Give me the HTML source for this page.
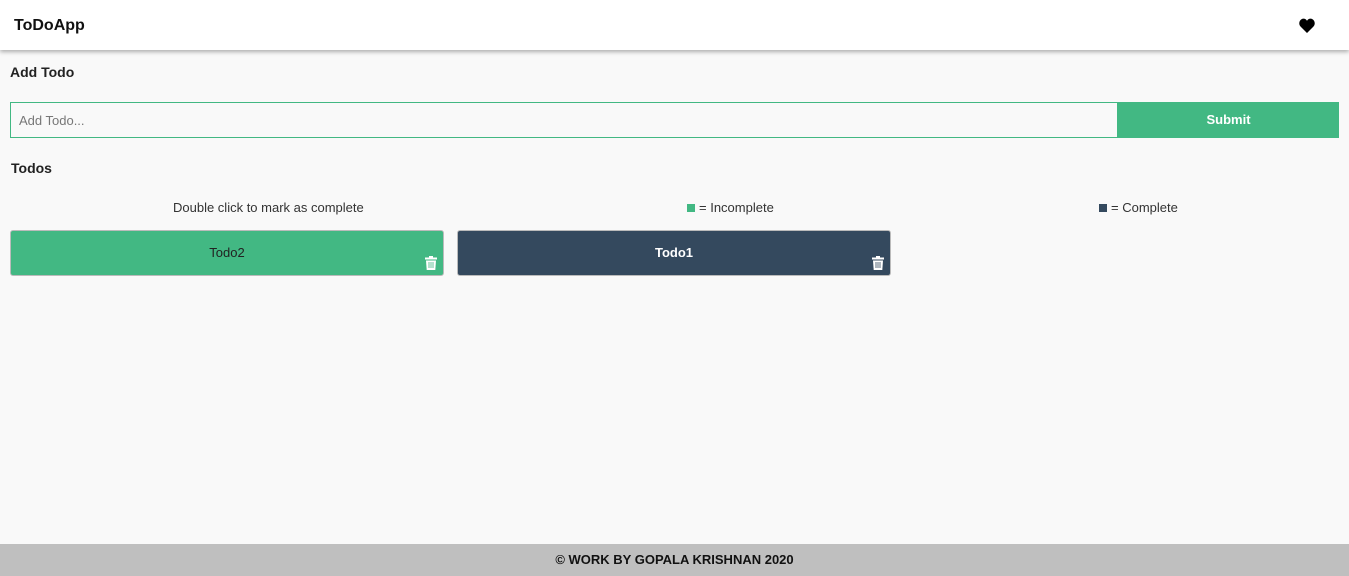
<!DOCTYPE html>
<html><head><style>
body{margin:0;width:1349px;height:576px;background:#f9f9f9;font-family:"Liberation Sans",sans-serif;position:relative;overflow:hidden}
.nav{position:absolute;left:0;top:0;width:1349px;height:50px;background:#fff;box-shadow:0 2px 4px rgba(0,0,0,.3)}
.nav .t{position:absolute;left:14px;top:17px;font-size:16px;font-weight:bold;color:#111}
.h{position:absolute;font-size:14px;font-weight:bold;color:#222}
.inp{position:absolute;left:10px;top:102px;width:1106px;height:34px;border:1px solid #42b883;background:#f9f9f9}
.inp span{position:absolute;left:8px;top:10px;font-size:13px;color:#777}
.btn{position:absolute;left:1118px;top:102px;width:221px;height:36px;background:#42b883;color:#fff;font-size:13px;font-weight:bold;text-align:center;line-height:36px}
.lg{position:absolute;top:200px;font-size:13px;color:#333}
.sq{display:inline-block;width:8px;height:8px;margin-right:4px}
.card{position:absolute;top:230px;width:434px;height:46px;border-radius:3px;border:1px solid #bbb;box-sizing:border-box;text-align:center;line-height:44px;font-size:13px}
.tr{position:absolute;right:6px;bottom:5px}
.foot{position:absolute;left:0;top:544px;width:1349px;height:32px;background:#bfbfbf;text-align:center;line-height:32px;font-size:13px;font-weight:bold;color:#111}
</style></head><body>
<div class="nav"><span class="t">ToDoApp</span>
<svg style="position:absolute;left:1299px;top:18px" width="16" height="15" viewBox="0 0 16 15"><path d="M8 15L1.5 8.5C-0.5 6.5 0 2.5 2.5 1.2 4.5 0 6.8 .8 8 2.7 9.2 .8 11.5 0 13.5 1.2 16 2.5 16.5 6.5 14.5 8.5Z" fill="#000"/></svg></div>
<div class="h" style="left:10px;top:64px">Add Todo</div>
<div class="inp"><span>Add Todo...</span></div>
<div class="btn">Submit</div>
<div class="h" style="left:11px;top:160px">Todos</div>
<div class="lg" style="left:173px">Double click to mark as complete</div>
<div class="lg" style="left:687px"><span class="sq" style="background:#42b883"></span>= Incomplete</div>
<div class="lg" style="left:1099px"><span class="sq" style="background:#34495e"></span>= Complete</div>
<div class="card" style="left:10px;background:#42b883;color:#222">Todo2
<svg class="tr" width="12" height="14" viewBox="0 0 12 14"><rect x="0" y="1.5" width="12" height="2" fill="#fff"/><rect x="4" y="0" width="4" height="2" fill="#fff"/><path d="M1 4.5h10l-.7 9.5H1.7Z" fill="#fff"/><path d="M4 6v6M6 6v6M8 6v6" stroke="#42b883" stroke-width=".8"/></svg></div>
<div class="card" style="left:457px;background:#34495e;color:#fff;font-weight:bold">Todo1
<svg class="tr" width="12" height="14" viewBox="0 0 12 14"><rect x="0" y="1.5" width="12" height="2" fill="#fff"/><rect x="4" y="0" width="4" height="2" fill="#fff"/><path d="M1 4.5h10l-.7 9.5H1.7Z" fill="#fff"/><path d="M4 6v6M6 6v6M8 6v6" stroke="#34495e" stroke-width=".8"/></svg></div>
<div class="foot">© WORK BY GOPALA KRISHNAN 2020</div>
</body></html>
